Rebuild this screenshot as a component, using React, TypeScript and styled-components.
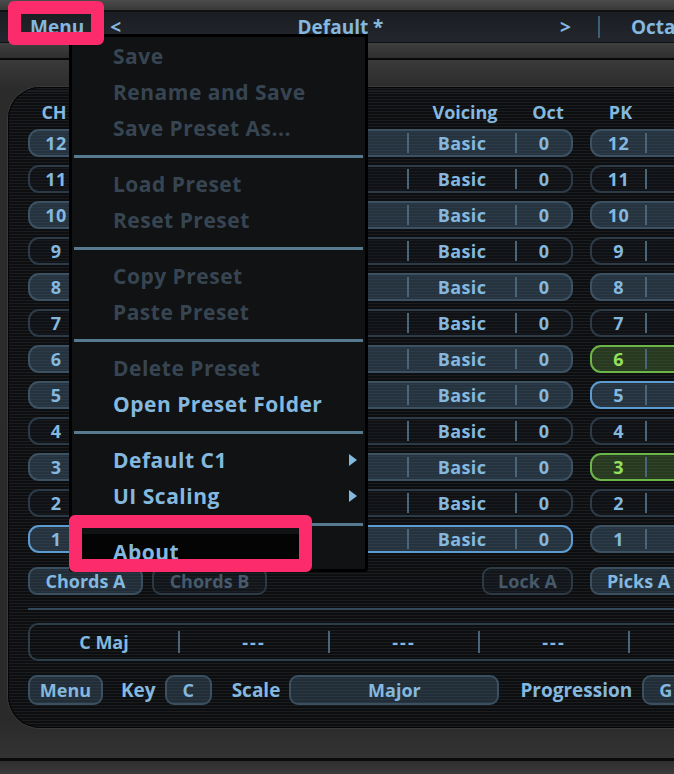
import React from "react";
import styled, { createGlobalStyle, css } from "styled-components";

// palette
const BLUE = "#84b8df";
const DIM = "#374552";
const PINK = "#fc2b6c";

const GlobalStyle = createGlobalStyle`
  html, body { margin: 0; padding: 0; background: #2c2c2c; }
  body { font-family: "Open Sans", "Liberation Sans", sans-serif; }
`;

const Screen = styled.div`
  position: relative;
  width: 674px;
  height: 774px;
  overflow: hidden;
  display: flex;
  flex-direction: column;
  background: #2c2c2c;
`;

// top area
const TopStrip = styled.div`
  height: 10px;
  background: linear-gradient(#4b4b4b, #393939);
`;
const TopBar = styled.div`
  height: 33px;
  box-sizing: border-box;
  border-top: 2px solid #0f1011;
  border-bottom: 1px solid #0f1011;
  background: linear-gradient(#1a1d22, #23272d);
  display: flex;
  align-items: center;
  padding-left: 30px;
  color: ${BLUE};
  font-weight: 700;
  font-size: 19px;
  white-space: nowrap;
`;
const BarText = styled.span<{ $ml?: number }>`
  margin-left: ${(p) => p.$ml ?? 0}px;
  flex: none;
`;
const BarTitle = styled.span`
  width: 439px;
  flex: none;
  text-align: center;
`;
const BarDivider = styled.span`
  width: 2px;
  height: 22px;
  flex: none;
  background: #3f5f76;
  margin-left: 27px;
`;
const Band = styled.div`
  height: 15px;
  background: linear-gradient(#404040, #2e2e2e);
`;
const DarkLine = styled.div`
  height: 2px;
  background: #080808;
`;

// frame and panel
const Frame = styled.div`
  height: 698px;
  box-sizing: border-box;
  padding: 27px 0 0 8px;
  background: linear-gradient(#3a3a3a 0px, #2b2b2b 30px, #2a2a2a 660px, #333 698px);
`;
const Panel = styled.div`
  width: 720px;
  height: 641px;
  box-sizing: border-box;
  padding: 12px 0 0 20px;
  border-radius: 32px 0 0 32px;
  background: repeating-linear-gradient(#1b1d21 0px, #1b1d21 1.5px, #0d0e10 1.5px, #0d0e10 3px);
  box-shadow: inset 0 0 0 1px #050505, 0 0 0 1px #3a3a3a;
  display: flex;
  flex-direction: column;
`;
const BottomLine = styled.div`
  height: 3px;
  background: #0a0a0a;
`;
const BottomStrip = styled.div`
  flex: 1;
  background: linear-gradient(#2f2f2f, #3a3a3a);
`;

// table
const HeaderRow = styled.div`
  display: flex;
  height: 26px;
  align-items: center;
  color: ${BLUE};
  font-weight: 700;
  font-size: 18px;
`;
const HeadCell = styled.div<{ $w?: number; $gap?: number }>`
  width: ${(p) => (p.$w ? `${p.$w}px` : "auto")};
  flex: ${(p) => (p.$w ? "none" : 1)};
  margin-left: ${(p) => p.$gap ?? 0}px;
  text-align: center;
`;
const Rows = styled.div`
  margin-top: 4px;
  display: flex;
  flex-direction: column;
  gap: 8px;
`;
const Row = styled.div`
  display: flex;
  gap: 17px;
`;

type Tone = "filled" | "dark" | "selected" | "green";

const toneCss = {
  filled: css`
    border-color: #3c5162;
    background: rgba(72, 102, 128, 0.42);
  `,
  dark: css`
    border-color: #2c3b47;
    background: rgba(20, 26, 32, 0.3);
  `,
  selected: css`
    border-color: #5d9cd0;
    background: rgba(72, 102, 128, 0.42);
  `,
  green: css`
    border-color: #6cb548;
    background: rgba(76, 120, 52, 0.42);
    color: #93e05e;
  `,
};

const Pill = styled.div<{ $w: number; $tone: Tone }>`
  width: ${(p) => p.$w}px;
  height: 28px;
  box-sizing: border-box;
  border: 2px solid;
  border-radius: 11px;
  display: flex;
  align-items: center;
  flex: none;
  color: ${BLUE};
  font-weight: 700;
  font-size: 18px;
  letter-spacing: 0.4px;
  ${(p) => toneCss[p.$tone]}
`;
const Cell = styled.div<{ $w?: number }>`
  width: ${(p) => (p.$w ? `${p.$w}px` : "auto")};
  flex: ${(p) => (p.$w ? "none" : 1)};
  text-align: center;
`;
const Divider = styled.div<{ $h?: number }>`
  width: 2px;
  height: ${(p) => p.$h ?? 20}px;
  background: #4a6579;
  flex: none;
`;

// buttons
const ButtonRow = styled.div`
  display: flex;
  margin-top: 14px;
  gap: 17px;
`;
const ButtonGroup = styled.div`
  width: 545px;
  display: flex;
  gap: 9px;
  flex: none;
`;
const Spacer = styled.div`
  flex: 1;
`;
const Btn = styled.div<{ $w: number; $off?: boolean; $h?: number; $left?: boolean }>`
  width: ${(p) => p.$w}px;
  height: ${(p) => p.$h ?? 28}px;
  box-sizing: border-box;
  border: 2px solid ${(p) => (p.$off ? "#2c3a46" : "#3a4f60")};
  border-radius: 9px;
  background: ${(p) => (p.$off ? "rgba(30,40,50,0.3)" : "rgba(66, 94, 118, 0.4)")};
  color: ${(p) => (p.$off ? "#465a6b" : BLUE)};
  font-weight: 700;
  font-size: 18px;
  display: flex;
  align-items: center;
  justify-content: ${(p) => (p.$left ? "flex-start" : "center")};
  padding-left: ${(p) => (p.$left ? "15px" : "0")};
  white-space: nowrap;
  flex: none;
`;
const Rule = styled.div`
  margin-top: 13px;
  height: 2px;
  background: #33485a;
`;
const Strip = styled.div`
  margin-top: 13px;
  height: 38px;
  box-sizing: border-box;
  border: 2px solid #2d3e4b;
  border-radius: 10px;
  display: flex;
  align-items: center;
  color: ${BLUE};
  font-weight: 700;
  font-size: 18px;
`;
const StripCell = styled.div<{ $empty?: boolean }>`
  width: 148px;
  text-align: center;
  flex: none;
  letter-spacing: ${(p) => (p.$empty ? "2px" : "0")};
`;
const BottomRow = styled.div`
  margin-top: 14px;
  display: flex;
  align-items: center;
  color: ${BLUE};
  font-weight: 700;
  font-size: 19px;
`;
const Label = styled.span<{ $ml: number; $mr: number }>`
  margin: 0 ${(p) => p.$mr}px 0 ${(p) => p.$ml}px;
  flex: none;
`;

// popup menu
const Menu = styled.div`
  position: absolute;
  left: 69px;
  top: 34px;
  width: 299px;
  height: 538px;
  box-sizing: border-box;
  border: 3px solid #000;
  border-radius: 0 0 4px 4px;
  background: #111213;
  padding-top: 1px;
  overflow: hidden;
  display: flex;
  flex-direction: column;
`;
const MenuItem = styled.div<{ $off?: boolean; $hl?: boolean }>`
  height: 36px;
  flex: none;
  display: flex;
  align-items: center;
  justify-content: space-between;
  padding: 0 6px 0 39px;
  margin: 0 ${(p) => (p.$hl ? 60 : 2)}px 0 2px;
  color: ${(p) => (p.$off ? DIM : BLUE)};
  background: ${(p) => (p.$hl ? "#040404" : "transparent")};
  font-weight: 700;
  font-size: 21px;
  letter-spacing: 0.5px;
  white-space: nowrap;
`;
const SubArrow = styled.span`
  width: 0;
  height: 0;
  border-left: 8px solid ${BLUE};
  border-top: 6px solid transparent;
  border-bottom: 6px solid transparent;
`;
const MenuSep = styled.div`
  height: 20px;
  flex: none;
  display: flex;
  align-items: center;
  margin: 0 2px;
  &::after {
    content: "";
    flex: 1;
    height: 3px;
    background: #587a91;
  }
`;

// annotation boxes
const Mark = styled.div<{ $x: number; $y: number; $w: number; $h: number }>`
  position: absolute;
  left: ${(p) => p.$x}px;
  top: ${(p) => p.$y}px;
  width: ${(p) => p.$w}px;
  height: ${(p) => p.$h}px;
  box-sizing: border-box;
  border: 13px solid ${PINK};
  border-radius: 6px;
`;

const BLACK_KEYS = [2, 4, 7, 9, 11];
const rows = [12, 11, 10, 9, 8, 7, 6, 5, 4, 3, 2, 1];

const chTone = (n: number): Tone =>
  n === 1 ? "selected" : BLACK_KEYS.includes(n) ? "dark" : "filled";
const pkTone = (n: number): Tone =>
  n === 6 || n === 3
    ? "green"
    : n === 5
    ? "selected"
    : BLACK_KEYS.includes(n)
    ? "dark"
    : "filled";

type Item = { label: string; off?: boolean; sub?: boolean; hl?: boolean } | "sep";
const menuItems: Item[] = [
  { label: "Save", off: true },
  { label: "Rename and Save", off: true },
  { label: "Save Preset As...", off: true },
  "sep",
  { label: "Load Preset", off: true },
  { label: "Reset Preset", off: true },
  "sep",
  { label: "Copy Preset", off: true },
  { label: "Paste Preset", off: true },
  "sep",
  { label: "Delete Preset", off: true },
  { label: "Open Preset Folder" },
  "sep",
  { label: "Default C1", sub: true },
  { label: "UI Scaling", sub: true },
  "sep",
  { label: "About", hl: true },
];

const slots = ["C Maj", "---", "---", "---", "---"];

function App() {
  return (
    <Screen>
      <GlobalStyle />
      <TopStrip />
      <TopBar>
        <BarText>Menu</BarText>
        <BarText $ml={26}>&lt;</BarText>
        <BarTitle>Default *</BarTitle>
        <BarText>&gt;</BarText>
        <BarDivider />
        <BarText $ml={31}>Octave</BarText>
      </TopBar>
      <Band />
      <DarkLine />
      <Frame>
        <Panel>
          <HeaderRow>
            <HeadCell $w={52}>CH</HeadCell>
            <HeadCell />
            <HeadCell $w={110}>Voicing</HeadCell>
            <HeadCell $w={56}>Oct</HeadCell>
            <HeadCell $w={55} $gap={17}>
              PK
            </HeadCell>
            <HeadCell $w={80} />
          </HeaderRow>
          <Rows>
            {rows.map((n) => (
              <Row key={n}>
                <Pill $w={545} $tone={chTone(n)}>
                  <Cell $w={52}>{n}</Cell>
                  <Divider />
                  <Cell />
                  <Divider />
                  <Cell $w={106}>Basic</Cell>
                  <Divider />
                  <Cell $w={54}>0</Cell>
                </Pill>
                <Pill $w={140} $tone={pkTone(n)}>
                  <Cell $w={53}>{n}</Cell>
                  <Divider />
                  <Cell />
                </Pill>
              </Row>
            ))}
          </Rows>
          <ButtonRow>
            <ButtonGroup>
              <Btn $w={115}>Chords A</Btn>
              <Btn $w={115} $off>
                Chords B
              </Btn>
              <Spacer />
              <Btn $w={91} $off>
                Lock A
              </Btn>
            </ButtonGroup>
            <Btn $w={130} $left>
              Picks A
            </Btn>
          </ButtonRow>
          <Rule />
          <Strip>
            {slots.map((s, i) => (
              <React.Fragment key={i}>
                {i > 0 ? <Divider $h={22} /> : null}
                <StripCell $empty={s === "---"}>{s}</StripCell>
              </React.Fragment>
            ))}
          </Strip>
          <BottomRow>
            <Btn $w={75} $h={30}>
              Menu
            </Btn>
            <Label $ml={18} $mr={9}>
              Key
            </Label>
            <Btn $w={47} $h={30}>
              C
            </Btn>
            <Label $ml={20} $mr={9}>
              Scale
            </Label>
            <Btn $w={210} $h={30}>
              Major
            </Btn>
            <Label $ml={21} $mr={10}>
              Progression
            </Label>
            <Btn $w={60} $h={30} $left>
              G
            </Btn>
          </BottomRow>
        </Panel>
      </Frame>
      <BottomLine />
      <BottomStrip />

      <Menu>
        {menuItems.map((it, i) =>
          it === "sep" ? (
            <MenuSep key={i} />
          ) : (
            <MenuItem key={i} $off={it.off} $hl={it.hl}>
              {it.label}
              {it.sub ? <SubArrow /> : null}
            </MenuItem>
          )
        )}
      </Menu>
      <Mark $x={8} $y={1} $w={96} $h={44} />
      <Mark $x={69} $y={515} $w={243} $h={57} />
    </Screen>
  );
}

export default App;
